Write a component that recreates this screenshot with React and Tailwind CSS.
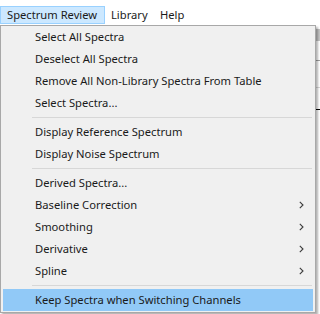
import { Fragment } from "react";

const menuItems = [
  { label: "Select All Spectra" },
  { label: "Deselect All Spectra" },
  { label: "Remove All Non-Library Spectra From Table" },
  { label: "Select Spectra..." },
  { sep: true },
  { label: "Display Reference Spectrum" },
  { label: "Display Noise Spectrum" },
  { sep: true },
  { label: "Derived Spectra..." },
  { label: "Baseline Correction", sub: true },
  { label: "Smoothing", sub: true },
  { label: "Derivative", sub: true },
  { label: "Spline", sub: true },
  { sep: true },
  { label: "Keep Spectra when Switching Channels", active: true },
];

const Chevron = () => (
  <svg width="5" height="8" viewBox="0 0 5 8" className="mr-[9px]">
    <path d="M0.8 0.8 L4 4 L0.8 7.2" fill="none" stroke="#3c3c3c" strokeWidth="1.1" />
  </svg>
);

const App = () => {
  return (
    <div className="relative w-[320px] h-[314px] bg-white overflow-hidden text-[11.2px] text-[#1a1a1a] font-['Noto_Sans',sans-serif] whitespace-nowrap">
      {/* menu bar */}
      <div className="pt-[6px] flex items-center h-[24px]">
        <div className="h-[18px] flex items-center px-[6px] bg-[#cce8ff] border border-[#99d1ff] w-[105px]">
          Spectrum Review
        </div>
        <div className="h-[18px] flex items-center pl-[6px] w-[55px]">Library</div>
        <div className="h-[18px] flex items-center">Help</div>
      </div>

      {/* window content behind the menu */}
      <div className="flex justify-end">
        <div className="w-[4px] mt-[5px] flex flex-col">
          <div className="h-[12px] bg-[#c4c4c4]"></div>
          <div className="h-[19px]"></div>
          <div className="h-px bg-[#a0a0a0]"></div>
          <div className="h-[26px]"></div>
          <div className="h-px bg-[#d8d8d8]"></div>
          <div className="h-[21px]"></div>
          <div className="h-px bg-black"></div>
        </div>
      </div>

      {/* dropdown */}
      <div className="absolute left-0 top-[25px] w-[316px] bg-[#f0f0f0] border border-[#a8a8a8] shadow-[2px_2px_2px_rgba(0,0,0,0.3)] px-[2px] pb-[1px]">
        {menuItems.map((item, i) => (
          <Fragment key={i}>
            {item.sep ? (
              <div className="pt-[3px] pb-[3px] pl-[29px] pr-[1px]">
                <div className="h-px bg-[#d7d7d7]"></div>
              </div>
            ) : (
              <div
                className={`h-[22px] flex items-center justify-between pl-[32px] ${
                  item.active ? "bg-[#91c9f7]" : ""
                }`}
              >
                <span>{item.label}</span>
                {item.sub && <Chevron />}
              </div>
            )}
          </Fragment>
        ))}
      </div>
    </div>
  );
};

export default App;
